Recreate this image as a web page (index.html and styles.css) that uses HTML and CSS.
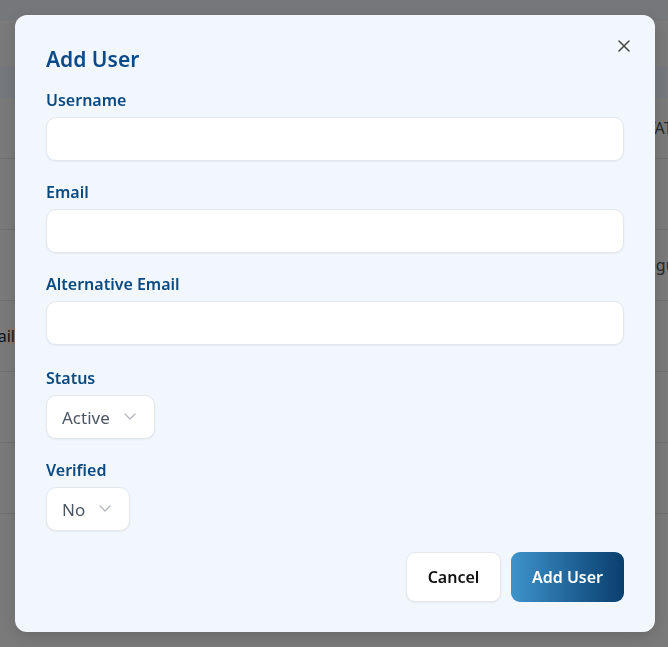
FILE: index.html
```html
<!DOCTYPE html>
<html lang="en">
<head>
<meta charset="utf-8">
<title>Add User</title>
<link rel="stylesheet" href="styles.css">
</head>
<body>
<div class="app">
  <div class="topbar"></div>
  <div class="spacer"></div>
  <div class="thead"></div>
  <div class="row row-first"><span class="cell-left"></span><span class="cell-right">STATUS</span></div>
  <div class="row"><span class="cell-left"></span><span class="cell-right"></span></div>
  <div class="row"><span class="cell-left"></span><span class="cell-right">Segundo</span></div>
  <div class="row"><span class="cell-left">Email</span><span class="cell-right"></span></div>
  <div class="row"><span class="cell-left"></span><span class="cell-right"></span></div>
  <div class="row"><span class="cell-left"></span><span class="cell-right"></span></div>
  <div class="row"><span class="cell-left"></span><span class="cell-right"></span></div>
</div>

<div class="overlay">
  <div class="modal" role="dialog" aria-labelledby="modal-title">
    <button class="close" aria-label="Close">
      <svg width="12" height="12" viewBox="0 0 12 12" fill="none" stroke="#444" stroke-width="1.5" stroke-linecap="round"><path d="M1 1L11 11M11 1L1 11"/></svg>
    </button>
    <h2 class="title" id="modal-title">Add User</h2>
    <form class="form">
      <div class="field">
        <label class="label" for="username">Username</label>
        <input class="input" id="username" type="text">
      </div>
      <div class="field">
        <label class="label" for="email">Email</label>
        <input class="input" id="email" type="email">
      </div>
      <div class="field">
        <label class="label" for="alt">Alternative Email</label>
        <input class="input" id="alt" type="email">
      </div>
      <div class="field field-status">
        <label class="label">Status</label>
        <div class="select">
          <span class="select-value">Active</span>
          <svg class="chev" width="12" height="7" viewBox="0 0 12 7" fill="none" stroke="#b3b7bd" stroke-width="1.3" stroke-linecap="round" stroke-linejoin="round"><path d="M1 1L6 6L11 1"/></svg>
        </div>
      </div>
      <div class="field">
        <label class="label">Verified</label>
        <div class="select">
          <span class="select-value">No</span>
          <svg class="chev" width="12" height="7" viewBox="0 0 12 7" fill="none" stroke="#b3b7bd" stroke-width="1.3" stroke-linecap="round" stroke-linejoin="round"><path d="M1 1L6 6L11 1"/></svg>
        </div>
      </div>
      <div class="actions">
        <button type="button" class="btn btn-cancel">Cancel</button>
        <button type="button" class="btn btn-primary">Add User</button>
      </div>
    </form>
  </div>
</div>
</body>
</html>
```
FILE: styles.css
```css
* { box-sizing: border-box; }
html, body { margin: 0; padding: 0; }
body {
  font-family: "Noto Sans", "Open Sans", "Liberation Sans", sans-serif;
  width: 668px;
  height: 647px;
  overflow: hidden;
  background: #f4f4f4;
}

.app { width: 668px; }
.topbar { height: 22px; background: #eceff4; border-bottom: 1px solid #f8f8f8; }
.spacer { height: 44px; background: #f4f4f4; }
.thead { height: 32px; background: #ebf2fb; }
.row {
  height: 71px;
  border-top: 1px solid #dedede;
  display: flex;
  align-items: center;
  justify-content: space-between;
  font-size: 16px;
  color: #1e2a3a;
}
.row-first { height: 60px; border-top: none; }
.cell-left {
  width: 15px;
  overflow: hidden;
  display: flex;
  justify-content: flex-end;
  white-space: nowrap;
}
.cell-right {
  width: 30px;
  overflow: hidden;
  white-space: nowrap;
  color: #4a5058;
}

.overlay {
  position: fixed;
  inset: 0;
  background: rgba(0, 0, 0, 0.5);
  padding: 15px;
}

.modal {
  position: relative;
  width: 640px;
  height: 617px;
  background: #f2f7fe;
  border-radius: 12px;
  padding: 31px 31px 30px;
  box-shadow: 0 4px 16px rgba(0, 0, 0, 0.15);
}

.close {
  position: absolute;
  top: 25px;
  right: 25px;
  width: 12px;
  height: 12px;
  padding: 0;
  border: none;
  background: none;
  display: flex;
  cursor: pointer;
}

.title {
  margin: 0 0 16px;
  font-size: 21px;
  line-height: 26px;
  font-weight: 600;
  color: #0b4a86;
}

.form { display: flex; flex-direction: column; gap: 19px; }
.field { display: flex; flex-direction: column; align-items: flex-start; gap: 5px; }
.field-status { margin-top: 2px; }
.label {
  font-size: 16px;
  line-height: 24px;
  font-weight: 600;
  color: #0b4a80;
}
.input {
  width: 100%;
  height: 44px;
  border: 1px solid #e4e8ee;
  border-radius: 10px;
  background: #fff;
  box-shadow: 0 1px 2px rgba(0, 0, 0, 0.06);
  font: inherit;
  outline: none;
}

.select {
  height: 44px;
  display: flex;
  align-items: center;
  gap: 14px;
  padding: 0 18px 0 15px;
  border: 1px solid #e4e8ee;
  border-radius: 10px;
  background: #fff;
  box-shadow: 0 1px 2px rgba(0, 0, 0, 0.06);
}
.select-value { font-size: 17px; color: #4b5563; }
.chev { margin-top: -2px; }

.actions {
  display: flex;
  justify-content: flex-end;
  gap: 10px;
  margin-top: 2px;
}
.btn {
  height: 50px;
  border-radius: 9px;
  font-family: inherit;
  font-size: 16px;
  font-weight: 600;
  cursor: pointer;
}
.btn-cancel {
  width: 95px;
  background: #fff;
  color: #111;
  border: 1px solid #e4e8ee;
  box-shadow: 0 1px 2px rgba(0, 0, 0, 0.06);
}
.btn-primary {
  width: 113px;
  border: none;
  color: #fff;
  background: linear-gradient(90deg, #3f93cb 0%, #1d5f93 60%, #0a3f6d 100%);
}
```
